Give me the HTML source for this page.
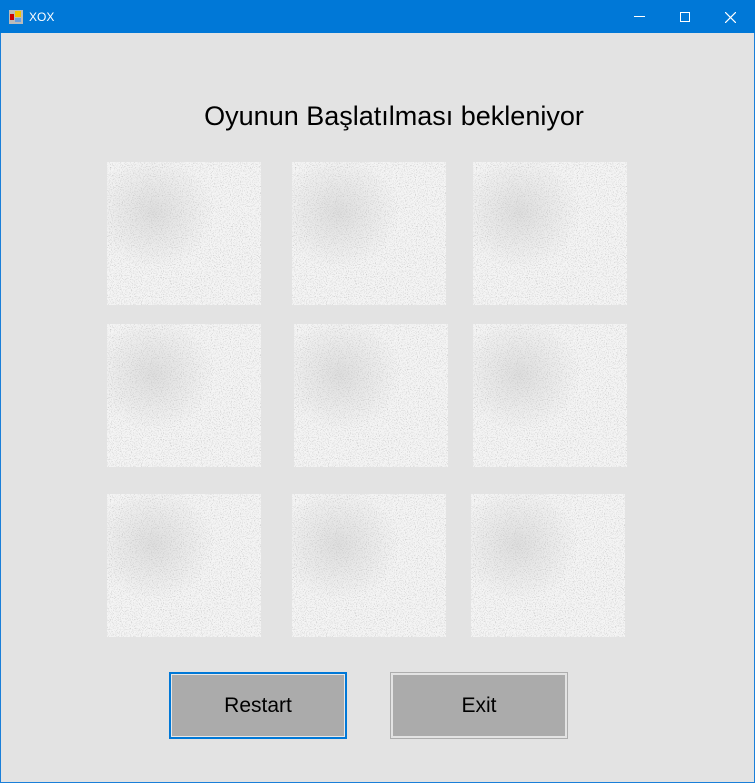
<!DOCTYPE html>
<html><head><meta charset="utf-8"><style>
*{margin:0;padding:0;box-sizing:border-box}
body{width:755px;height:783px;background:#e3e3e3;font-family:"Liberation Sans",Arial,sans-serif;position:relative;overflow:hidden}
.win{position:absolute;left:0;top:0;width:755px;height:783px;border:1px solid #1a7fd9;border-top:none}
.title{position:absolute;left:0;top:0;width:755px;height:33px;background:#0078d7;color:#fff;font-size:12px}
.title .t{position:absolute;left:29px;top:10px}
.h{position:absolute;left:0;top:101px;width:755px;text-align:center;font-size:27px;color:#000;padding-left:33px}
.btn{position:absolute;top:672px;width:178px;height:67px;background:#ababab;font-size:21px;display:flex;align-items:center;justify-content:center;color:#000}
</style></head><body>
<div class="win"></div>
<div class="title">
<svg style="position:absolute;left:9px;top:10px" width="14" height="14"><rect x="0" y="0" width="14" height="14" fill="#bbb"/><rect x="1" y="4" width="4" height="6" fill="#c00"/><rect x="6" y="1" width="6" height="6" fill="#f2c200"/><rect x="6" y="8" width="6" height="4" fill="#6aa0e0"/></svg>
<span class="t">XOX</span>
<div style="position:absolute;left:634px;top:16px;width:11px;height:1px;background:#fff"></div>
<div style="position:absolute;left:680px;top:12px;width:10px;height:10px;border:1px solid #fff"></div>
<svg style="position:absolute;left:725px;top:12px" width="11" height="11"><path d="M0 0L11 11M11 0L0 11" stroke="#fff" stroke-width="1.2"/></svg>
</div>
<div class="h">Oyunun Başlatılması bekleniyor</div>
<svg width="755" height="783" style="position:absolute;left:0;top:0">
<defs>
<filter id="n" x="0" y="0" width="100%" height="100%"><feTurbulence type="fractalNoise" baseFrequency="0.9" numOctaves="2" seed="3"/><feColorMatrix type="matrix" values="0 0 0 0 0.5  0 0 0 0 0.5  0 0 0 0 0.5  0 0 0 -2.6 1.25"/></filter>
<radialGradient id="g" cx="0.3" cy="0.35" r="0.4"><stop offset="0" stop-color="#aaa" stop-opacity=".3"/><stop offset="1" stop-color="#aaa" stop-opacity="0"/></radialGradient>
<g id="t">
<rect width="154" height="143" fill="#f4f4f4"/>
<rect width="154" height="143" fill="url(#g)"/>
<rect width="154" height="143" filter="url(#n)"/>
</g>
</defs>
<use href="#t" x="107" y="162"/><use href="#t" x="292" y="162"/><use href="#t" x="473" y="162"/>
<use href="#t" x="107" y="324"/><use href="#t" x="294" y="324"/><use href="#t" x="473" y="324"/>
<use href="#t" x="107" y="494"/><use href="#t" x="292" y="494"/><use href="#t" x="471" y="494"/>
</svg>
<div class="btn" style="left:169px;border:2px solid #0078d7;box-shadow:inset 0 0 0 1px #e8e8e8">Restart</div>
<div class="btn" style="left:390px;border:1px solid #adadad;box-shadow:inset 0 0 0 2px #e3e3e3">Exit</div>
</body></html>
